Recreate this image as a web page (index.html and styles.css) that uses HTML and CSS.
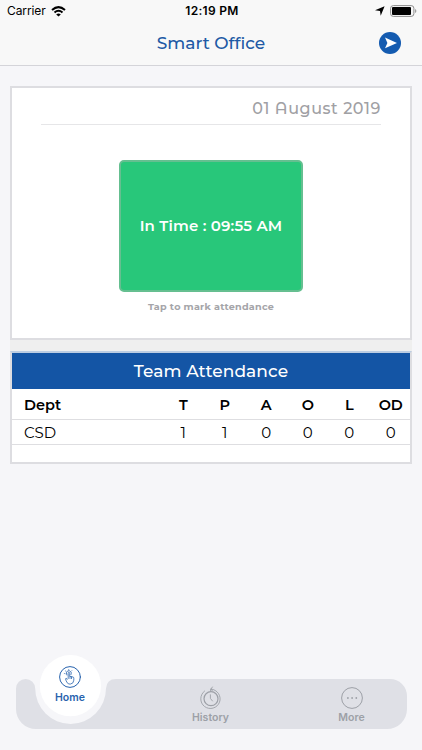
FILE: index.html
```html
<!DOCTYPE html>
<html lang="en">
<head>
<meta charset="utf-8">
<meta name="viewport" content="width=device-width">
<title>Smart Office</title>
<link rel="stylesheet" href="styles.css">
</head>
<body>
<div class="app">
  <header class="header">
    <div class="status">
      <div class="status-left"><span class="carrier">Carrier</span>
        <svg width="15" height="11" viewBox="0 0 15 11" fill="none" stroke="#000" stroke-width="2"><path d="M1 4Q7.500-1.700 14 4"/><path d="M3.500 6.600Q7.500 3 11.500 6.600"/><path d="M7.500 10.500L5.200 8.400Q7.500 6.600 9.800 8.400Z" fill="#000" stroke="none"/></svg>
      </div>
      <span class="clock">12:19 PM</span>
      <div class="status-right">
        <svg width="10" height="10" viewBox="0 0 10 10"><path d="M9.600.2L5.700 9.800L5 5L0 4.300Z"/></svg>
        <svg width="27" height="12" viewBox="0 0 27 12"><rect x=".6" y=".6" width="23.300" height="10.800" rx="2.700" fill="none" stroke="#8c8c8c"/><rect x="2" y="2" width="19" height="8" rx="1"/><path d="M25 4Q26.400 4.500 26.400 6T25 8Z" fill="#a0a0a0"/></svg>
      </div>
    </div>
    <div class="nav">
      <h1 class="title">Smart Office</h1>
      <svg class="send" width="22" height="22" viewBox="0 0 22 22"><circle cx="11" cy="11" r="11" fill="#145bb0"/><path d="M6 5.500L18 11L6 16.300L8.400 11Z" fill="#fff"/></svg>
    </div>
  </header>
  <main class="content">
    <section class="card">
      <div class="date">01 <span class="alt">A</span>ugust 2019</div>
      <button class="punch"><span>In Time : 09:55 AM</span></button>
      <p class="hint">Tap to mark attendance</p>
    </section>
    <section class="team">
      <h2 class="team-title"><span>Team Attendance</span></h2>
      <div class="row row-head"><span>Dept</span><span>T</span><span>P</span><span>A</span><span>O</span><span>L</span><span>OD</span></div>
      <div class="row"><span>CSD</span><span>1</span><span>1</span><span>0</span><span>0</span><span>0</span><span>0</span></div>
    </section>
  </main>
  <nav class="tabs">
    <svg class="tabs-bg" width="391" height="75" viewBox="0 0 391 75"><path d="M0 33.500A9.600 9.600 0 0 1 19.200 33.500A35.400 35.400 0 0 0 90 33.500Q90.500 24 100 24H374A17 17 0 0 1 391 41V54A20 20 0 0 1 371 74H20A20 20 0 0 1 0 54Z" fill="#dfe0e6"/><circle cx="54.400" cy="30.700" r="30.600" fill="#fff"/></svg>
    <a class="tab tab-home">
      <svg width="22" height="22" viewBox="0 0 22 22" fill="none" stroke="#2863ad" stroke-linecap="round" stroke-linejoin="round"><circle cx="11" cy="11" r="10.400" stroke-width="1"/><path d="M9.200 12.500V7.200Q9.300 6.200 10.200 6.400Q10.700 6.500 10.700 7.200V10.300L14 11Q14.900 11.200 14.800 12.200V14.200Q14.600 17.600 11.600 18H9.900Q7.800 17.300 6.900 14.200Q6.300 12.300 7 12.200Q7.600 12 8.200 13.300M11 10.500V12.500M12.500 10.900V12.600M7.800 9Q6.600 6.500 8.300 5.200Q10.400 3.800 12.200 6.200Q12.500 7.700 12 8.600" stroke-width=".8"/><path d="M5.300 7.500L6.200 7.700M6.300 4.800L7 5.400M9.700 3.400V4.200M12.900 4.500L12.300 5.100" stroke-width=".6"/></svg>
      <span>Home</span>
    </a>
    <a class="tab tab-history">
      <svg width="22" height="23" viewBox="0 0 22 23" fill="none" stroke="#9da0a7" stroke-linecap="round"><path d="M4.600 5A9.700 9.700 0 1 0 11.200 3.100" stroke-width=".9"/><circle cx="11" cy="12.700" r="7" stroke-width="1.200"/><path d="M10.400 8.800V12.400L12.500 15M12.400 1L11 3L12.500 5M10.600 3.200V5.400" stroke-width=".9"/></svg>
      <span>History</span>
    </a>
    <a class="tab tab-more">
      <svg width="22" height="22" viewBox="0 0 22 22"><circle cx="11" cy="11" r="10.400" fill="none" stroke="#9da0a7"/><g fill="#9da0a7"><circle cx="6.900" cy="11" r=".9"/><circle cx="11.100" cy="11" r=".9"/><circle cx="15.300" cy="11" r=".9"/></g></svg>
      <span>More</span>
    </a>
  </nav>
</div>
</body>
</html>
```
FILE: styles.css
```css
* { box-sizing: border-box; }
body { margin: 0; font-family: Montserrat, Inter, sans-serif; color: #000; background: #f6f6f9; }
.app { width: 422px; height: 750px; display: flex; flex-direction: column; background: #f6f6f9; overflow: hidden; }
.header { height: 66px; background: #f8f8f8; border-bottom: 1px solid #d4d4d9; }
.status { height: 22px; padding: 0 5px 0 7px; display: grid; grid-template-columns: 1fr auto 1fr; align-items: center; font-family: Inter, sans-serif; font-size: 12px; line-height: 22px; }
.status-left, .status-right { display: flex; align-items: center; height: 21px; gap: 5px; }
.status-right { justify-content: flex-end; }
.carrier { letter-spacing: -.1px; }
.clock { font-weight: 600; letter-spacing: .3px; }
.nav { height: 41px; display: grid; grid-template-columns: 32px 1fr 32px; align-items: center; padding-right: 11px; }
.title { grid-column: 2; margin: 0; padding-left: 11px; text-align: center; font-size: 17px; font-weight: 500; color: #2059a5; line-height: 22px; }
.send { display: block; }
.content { margin: 20px 10px 0; background: #efefef; }
.card { height: 254px; border: 2px solid #dddde1; background: #fff; padding: 0 29px; }
.date { height: 37px; border-bottom: 1px solid #e6e6e8; text-align: right; font-size: 16px; font-weight: 500; line-height: 41px; color: #a0a0a4; letter-spacing: .55px; }
.alt { font-family: "Montserrat Alternates", Montserrat, Inter, sans-serif; }
.punch { display: flex; align-items: center; justify-content: center; width: 184px; height: 132px; margin: 35px auto 0; padding: 0; border: 2px solid #65bf90; border-radius: 5px; background: #28c77a; color: #fff; font: 600 15px/20px Montserrat, Inter, sans-serif; letter-spacing: .15px; }
.hint { margin: 8px 0 0; text-align: center; font-size: 9.600px; font-weight: 700; line-height: 14px; color: #a5a5a9; letter-spacing: .25px; }
.team { height: 113px; margin-top: 11px; border: 2px solid #dddde1; border-top-color: #bccde2; background: #fff; }
.team-title { height: 36px; margin: 0; background: #1455a5; color: #fff; text-align: center; font-size: 17px; font-weight: 500; line-height: 36px; letter-spacing: .08px; }
.row { display: grid; grid-template-columns: 150.500px repeat(6, 41.500px); height: 25px; border-bottom: 1px solid #dedee1; font-size: 15px; font-weight: 400; line-height: 26px; text-align: center; }
.row span:first-child { text-align: left; padding-left: 12px; }
.row-head { height: 31px; font-size: 14.500px; font-weight: 600; line-height: 32px; }
.tabs { position: relative; width: 391px; height: 75px; margin: auto 0 20px 16px; display: grid; grid-template-columns: 108px 173px 110px; font-family: Inter, sans-serif; font-size: 10.500px; font-weight: 600; color: #9da0a7; }
.tabs-bg { position: absolute; inset: 0; }
.tab { position: relative; display: flex; flex-direction: column; align-items: center; line-height: 14px; letter-spacing: .05px; }
.tab svg { display: block; flex: none; }
.tab-home { color: #2863ad; padding-top: 11px; }
.tab-home span { margin-top: 3px; }
.tab-history { padding-top: 31px; }
.tab-history span { margin-top: 2px; }
.tab-more { padding: 32px 1px 0 0; }
.tab-more span { margin-top: 2px; }
```
